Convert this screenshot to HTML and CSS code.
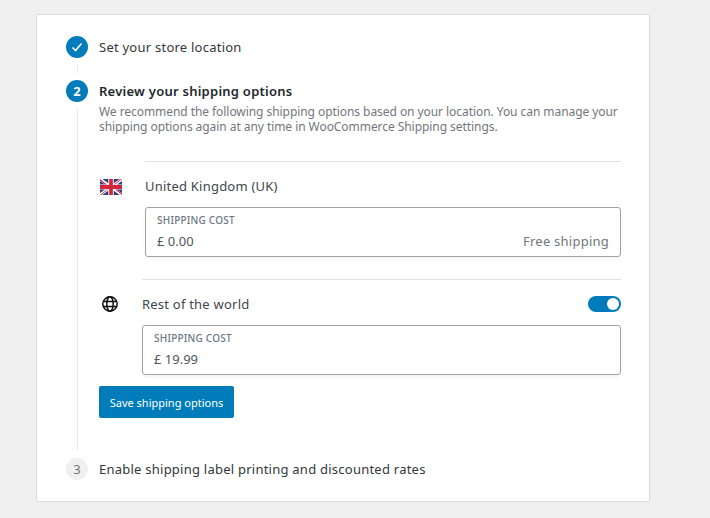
FILE: index.html
```html
<!DOCTYPE html>
<html lang="en">
<head>
<meta charset="utf-8">
<title>Shipping</title>
<link rel="stylesheet" href="styles.css">
</head>
<body>
<main class="card">
  <section class="step step-done">
    <div class="rail">
      <span class="badge badge-active">
        <svg class="check" width="14" height="14" viewBox="0 0 14 14"><path d="M2.5 7.5l3 3 6-7" fill="none" stroke="#fff" stroke-width="1.6"/></svg>
      </span>
      <span class="line"></span>
    </div>
    <div class="body"><h2 class="title">Set your store location</h2></div>
  </section>

  <section class="step step-current">
    <div class="rail">
      <span class="badge badge-active">2</span>
      <span class="line"></span>
    </div>
    <div class="body">
      <h2 class="title title-strong">Review your shipping options</h2>
      <p class="desc">We recommend the following shipping options based on your location. You can manage your shipping options again at any time in WooCommerce Shipping settings.</p>

      <div class="zone zone-uk">
        <div class="zone-icon">
          <svg width="22" height="16" viewBox="0 0 24 16" preserveAspectRatio="none">
            <rect width="24" height="16" fill="#fff"/>
            <path d="M2.5 0L9 4.2V0zM21.5 0L15 4.2V0zM0 2v3.5h5.5zM24 2v3.5h-5.5zM0 14v-3.5h5.5zM24 14v-3.5h-5.5zM2.5 16L9 11.8V16zM21.5 16L15 11.8V16z" fill="#2a3f7e"/>
            <path d="M0 0l7.5 5.5H5.6L0 1.4zM24 16l-7.5-5.5h1.9l5.6 4.1zM24 0l-7.5 5.5h-1.2L22.5 0zM0 16l7.5-5.5h1.2L1.5 16z" fill="#d5233c"/>
            <path d="M10 0h4v6h10v4H14v6h-4v-6H0V6h10z" fill="#d5233c"/>
          </svg>
        </div>
        <div class="zone-main">
          <div class="zone-head"><span>United Kingdom (UK)</span></div>
          <div class="field">
            <div class="field-label">SHIPPING COST</div>
            <div class="field-row"><span>£ 0.00</span><span class="field-note">Free shipping</span></div>
          </div>
        </div>
      </div>

      <div class="zone zone-world">
        <div class="zone-icon">
          <svg width="18" height="18" viewBox="0 0 18 18" fill="none" stroke="#111" stroke-width="1.5">
            <circle cx="9" cy="9" r="7.2"/>
            <ellipse cx="9" cy="9" rx="3.2" ry="7.2"/>
            <path d="M2.2 6.6h13.6M2.2 11.4h13.6"/>
          </svg>
        </div>
        <div class="zone-main">
          <div class="zone-head">
            <span>Rest of the world</span>
            <span class="toggle"><span class="knob"></span></span>
          </div>
          <div class="field">
            <div class="field-label">SHIPPING COST</div>
            <div class="field-row"><span>£ 19.99</span></div>
          </div>
        </div>
      </div>

      <button class="save" type="button">Save shipping options</button>
    </div>
  </section>

  <section class="step step-last">
    <div class="rail"><span class="badge badge-idle">3</span></div>
    <div class="body"><h2 class="title">Enable shipping label printing and discounted rates</h2></div>
  </section>
</main>
</body>
</html>
```
FILE: styles.css
```css
* { box-sizing: border-box; }
html, body { margin: 0; padding: 0; }
body {
  background: #f0f0f0;
  font-family: "Noto Sans", "Open Sans", sans-serif;
  color: #23282d;
  font-size: 13px;
  height: 518px;
  overflow: hidden;
  padding: 14px 60px 0 36px;
}
.card {
  width: 614px;
  height: 488px;
  background: #fff;
  border: 1px solid #dcdcdc;
  border-radius: 2px;
  padding: 21px 28px 21px 29px;
  display: flex;
  flex-direction: column;
}
.step { display: flex; gap: 11px; }
.step-done { height: 44px; }
.step-current { height: 378px; }
.rail { width: 22px; flex: none; display: flex; flex-direction: column; align-items: center; }
.badge {
  width: 22px; height: 22px; border-radius: 50%; flex: none;
  display: flex; align-items: center; justify-content: center;
  font-size: 13px; line-height: 22px;
}
.badge-active { background: #007cba; color: #fff; font-weight: 700; }
.badge-idle { background: #f0f0f0; color: #72777c; }
.line { width: 1px; flex: 1; background: #e8e8e8; margin: 6px 0 8px; }
.step-done .line { margin: 7px 0; }
.body { flex: 1; min-width: 0; }
.title { margin: 0; font-size: 13px; line-height: 22px; font-weight: 400; color: #32373c; letter-spacing: .24px; }
.title-strong { font-weight: 600; letter-spacing: .25px; color: #23282d; }
.desc { margin: 2px 0 0; font-size: 12px; line-height: 15px; color: #72777c; letter-spacing: -.06px; }
.zone { display: flex; }
.zone-uk { margin-top: 27px; }
.zone-world { margin-top: 22px; }
.zone-uk .zone-icon { width: 46px; padding: 18px 0 0 1px; }
.zone-world .zone-icon { width: 43px; padding: 16px 0 0 2px; }
.zone-icon svg { display: block; }
.zone-main { flex: 1; border-top: 1px solid #e0e0e0; }
.zone-head {
  height: 45px; padding-top: 2px; display: flex; align-items: center; justify-content: space-between;
  font-size: 13px; color: #40464d; letter-spacing: .22px;
}
.toggle {
  width: 33px; height: 16px; border-radius: 8px; background: #007cba;
  display: flex; align-items: center; justify-content: flex-end; padding-right: 2px;
}
.knob { width: 12px; height: 12px; border-radius: 50%; background: #fff; }
.field {
  height: 50px; border: 1px solid #a2a2a2; border-radius: 3px;
  padding: 5px 11px 0;
  box-shadow: 0 2px 4px rgba(0,0,0,.05);
}
.field-label { font-size: 10px; line-height: 14px; font-weight: 500; color: #6c7781; letter-spacing: .22px; }
.field-row {
  display: flex; justify-content: space-between; align-items: center;
  margin-top: 4px; font-size: 13px; line-height: 20px; color: #50565c;
}
.field-note { color: #72777c; letter-spacing: .24px; }
.save {
  display: block; margin-top: 11px; width: 135px; height: 32px; padding: 0;
  background: #007cba; color: #fff; border: 0; border-radius: 2px;
  font-family: inherit; font-size: 11px;
}
```
